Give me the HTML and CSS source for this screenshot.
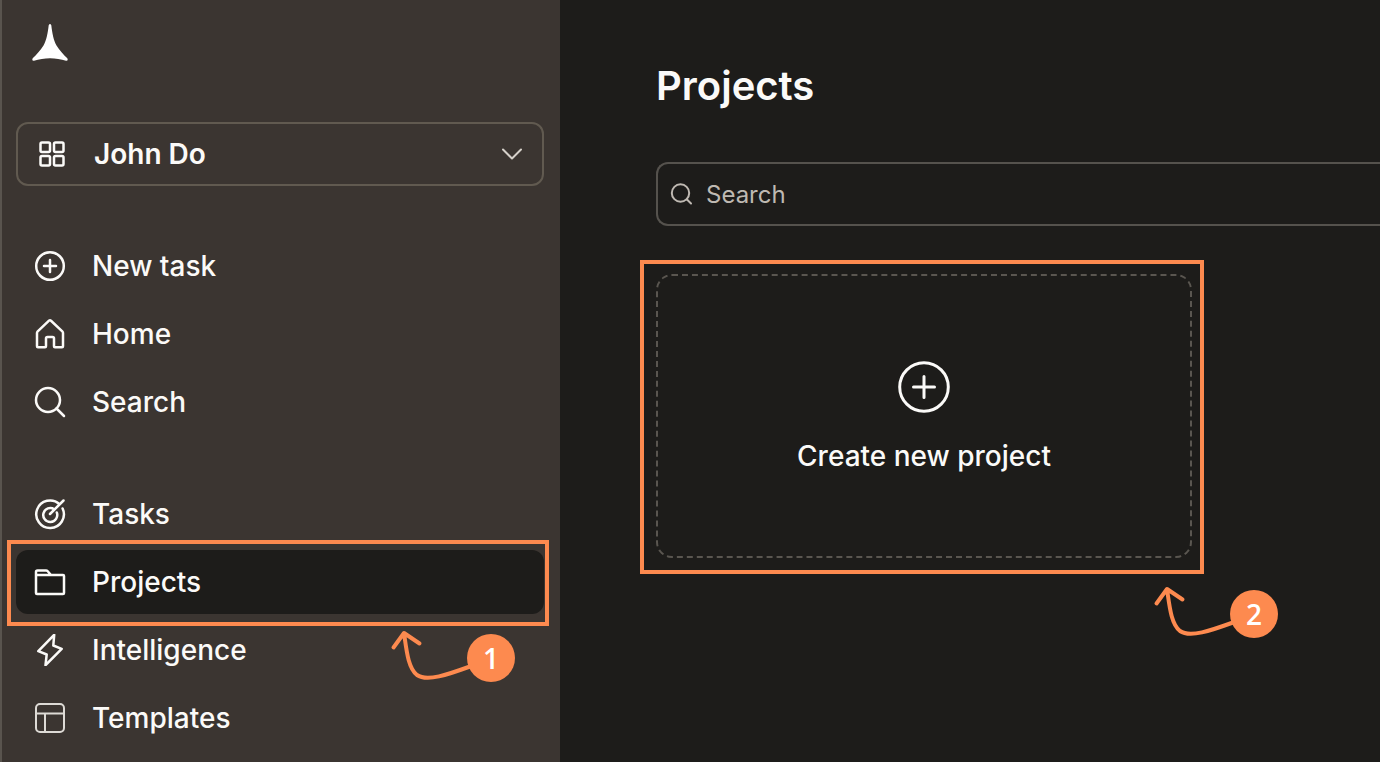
FILE: index.html
```html
<!DOCTYPE html>
<html lang="en">
<head>
<meta charset="utf-8">
<title>Projects</title>
<link rel="stylesheet" href="styles.css">
</head>
<body>
<div class="app">
  <aside class="sidebar">
    <a class="brand" href="#" aria-label="Dashboard">
      <svg class="logo" viewBox="0 0 36 38" aria-hidden="true"><path d="M16.700 1.200Q18-1 19.300 1.200C20.200 9 21.600 16.500 24.500 21.500C27.500 26.500 31.500 30.500 35.300 34.300Q36.500 37 34 36.700C29 35.200 23.500 34.300 18 34.300S7 35.200 2 36.700Q-.5 37 .7 34.300C4.500 30.500 8.500 26.500 11.500 21.500C14.400 16.500 15.800 9 16.700 1.200Z"/></svg>
    </a>
    <div class="workspace">
      <svg class="icon" viewBox="0 0 32 32" aria-hidden="true"><g><rect x="4.500" y="4.500" width="9.500" height="9.500" rx="1.500"/><rect x="18" y="4.500" width="9.500" height="9.500" rx="1.500"/><rect x="4.500" y="18" width="9.500" height="9.500" rx="1.500"/><rect x="18" y="18" width="9.500" height="9.500" rx="1.500"/></g></svg>
      <select class="workspace-select" aria-label="Workspace"><option>John Do</option></select>
      <svg class="chevron" viewBox="0 0 20 12" aria-hidden="true"><path d="M1 1.500l9 9 9-9"/></svg>
    </div>
    <nav class="nav">
      <div class="nav-group">
        <a class="nav-item" href="#"><svg class="icon" viewBox="0 0 32 32" aria-hidden="true"><circle cx="16" cy="16" r="13.800"/><path d="M16 10v12M10 16h12"/></svg>New task</a>
        <a class="nav-item" href="#"><svg class="icon" viewBox="0 0 32 32" aria-hidden="true"><path d="M4 29.200q-1 0-1-1V15q0-1 .7-1.700L15 2.700q1-.9 2 0l11.300 10.600q.7.700.7 1.700v13.200q0 1-1 1h-7q-1 0-1-1V20.500q0-1.500-1.500-1.500h-5q-1.500 0-1.500 1.500v7.700q0 1-1 1Z"/></svg>Home</a>
        <a class="nav-item" href="#"><svg class="icon" viewBox="0 0 32 32" aria-hidden="true"><circle cx="14" cy="14" r="12"/><path d="M22.500 22.500l7.500 7.500"/></svg>Search</a>
      </div>
      <div class="nav-group">
        <a class="nav-item" href="#"><svg class="icon" viewBox="0 0 32 32" aria-hidden="true"><path d="M25.500 6.200A13.800 13.800 0 1 0 28.600 10.500M20.200 11.200A7 7 0 1 0 22.800 14.500M16 16L29.500 2.500"/></svg>Tasks</a>
        <a class="nav-item nav-item-active" href="#" aria-current="page"><svg class="icon" viewBox="0 0 32 32" aria-hidden="true"><path d="M2 9V6q0-1.500 1.500-1.500h8.500q1 0 1.700.8L17 9M2 9h27q1 0 1 1v17q0 1-1 1H3q-1 0-1-1Z"/></svg>Projects
          <span class="frame frame-nav"></span>
          <span class="callout callout-nav"><svg class="arrow" viewBox="0 0 77 54" aria-hidden="true"><path d="M3.500 19.500L14 5l15.500 10.500M14 5C16.500 22 18 40 27 47C37 54 58 46.500 80 38.500"/></svg><span class="badge">1</span></span>
        </a>
        <a class="nav-item" href="#"><svg class="icon" viewBox="0 0 32 32" aria-hidden="true"><path d="M20.200.8L4.300 17.200l8.400 3.300L11.500 31.200 27.700 14.800l-8.400-3.300Z"/></svg>Intelligence</a>
        <a class="nav-item" href="#"><svg class="icon icon-light" viewBox="0 0 32 32" aria-hidden="true"><rect x="2" y="2" width="28" height="28" rx="4"/><path d="M2 11.500h28M11 11.500V30"/></svg>Templates</a>
      </div>
    </nav>
  </aside>
  <main class="main">
    <h1 class="title">Projects</h1>
    <label class="search">
      <svg class="search-icon" viewBox="0 0 22 22" aria-hidden="true"><circle cx="10.500" cy="10" r="8.700"/><path d="M17 16.500l4 4"/></svg>
      <input class="search-input" type="search" placeholder="Search" aria-label="Search">
    </label>
    <div class="projects">
      <button class="create" type="button">
        <svg class="create-icon" viewBox="0 0 52 52" aria-hidden="true"><circle cx="26" cy="26" r="24.300"/><path d="M26 15.500v21M15.500 26h21"/></svg>
        Create new project
      </button>
      <span class="frame frame-create"></span>
      <span class="callout callout-create"><svg class="arrow" viewBox="0 0 77 54" aria-hidden="true"><path d="M3.500 19.500L14 5l15.500 10.500M14 5C16.500 22 18 40 27 47C37 54 58 46.500 80 38.500"/></svg><span class="badge">2</span></span>
    </div>
  </main>
</div>
</body>
</html>
```

FILE: styles.css
```css
:root {
  --sidebar: #3b3531;
  --surface: #1d1c1a;
  --text: #fbfaf8;
  --accent: #fd8a4f;
}

* {
  box-sizing: border-box;
}

body {
  margin: 0;
  background: var(--surface);
  color: var(--text);
  font-family: Inter, "Liberation Sans", sans-serif;
  font-size: 28px;
  font-weight: 500;
  line-height: 36px;
}

svg {
  display: block;
  flex: none;
  fill: none;
  stroke: currentColor;
  stroke-width: 2.500;
  stroke-linecap: round;
  stroke-linejoin: round;
}

.app {
  display: flex;
  height: 100vh;
  overflow: hidden;
}

.sidebar {
  flex: none;
  width: 560px;
  padding: 24px 16px 12px 14px;
  background: var(--sidebar);
  border-left: 2px solid #59544e;
}

.brand {
  display: block;
  width: 36px;
  margin-left: 16px;
  color: #fff;
}

.logo {
  width: 36px;
  height: 38px;
  fill: currentColor;
  stroke: none;
}

.workspace {
  display: flex;
  align-items: center;
  gap: 26px;
  height: 64px;
  margin-top: 60px;
  padding: 0 20px 0 18px;
  border: 2px solid #615a50;
  border-radius: 12px;
}

.workspace-select {
  flex: 1;
  min-width: 0;
  height: 60px;
  padding: 0;
  border: 0;
  appearance: none;
  background: transparent;
  color: inherit;
  font: inherit;
  font-weight: 600;
}

.chevron {
  width: 20px;
  height: 12px;
  color: #d6d1ca;
  stroke-width: 2;
}

.nav {
  display: grid;
  gap: 48px;
  margin-top: 48px;
}

.nav-group {
  display: grid;
  gap: 4px;
}

.nav-item {
  position: relative;
  display: flex;
  align-items: center;
  gap: 26px;
  height: 64px;
  padding: 0 18px;
  border-radius: 12px;
  color: inherit;
  text-decoration: none;
}

.nav-item-active {
  z-index: 1;
  background: var(--surface);
}

.icon {
  width: 32px;
  height: 32px;
}

.icon-light {
  color: #dedbd6;
  stroke-width: 2;
}

.main {
  flex: 1;
  min-width: 0;
  padding: 62px 0 0 96px;
}

.title {
  margin: 0;
  font-size: 40px;
  font-weight: 600;
  line-height: 48px;
}

.search {
  display: flex;
  align-items: center;
  gap: 14px;
  height: 64px;
  margin-top: 52px;
  padding-left: 12px;
  border: 2px solid #55524d;
  border-right: 0;
  border-radius: 12px 0 0 12px;
  color: #bfb9b2;
}

.search-icon {
  width: 22px;
  height: 22px;
  stroke-width: 2;
}

.search-input {
  flex: 1;
  min-width: 0;
  height: 60px;
  padding: 0;
  border: 0;
  outline: 0;
  background: transparent;
  color: inherit;
  font: inherit;
  font-size: 24px;
  font-weight: 400;
}

.search-input::placeholder {
  color: inherit;
}

.projects {
  position: relative;
  width: 536px;
  margin-top: 48px;
}

.create {
  display: flex;
  flex-direction: column;
  align-items: center;
  justify-content: center;
  gap: 25px;
  width: 100%;
  height: 284px;
  padding: 3px 0 0;
  border: 2px dashed #5a5650;
  border-radius: 16px;
  background: transparent;
  color: inherit;
  font: inherit;
}

.create-icon {
  width: 52px;
  height: 52px;
  stroke-width: 3;
}

.frame {
  position: absolute;
  border: 4px solid var(--accent);
  pointer-events: none;
}

.frame-nav {
  inset: -10px -5px -12px -9px;
}

.frame-create {
  inset: -14px -12px -16px -16px;
}

.callout {
  position: absolute;
  display: flex;
  align-items: flex-end;
}

.callout-nav {
  top: 78px;
  right: 29px;
}

.callout-create {
  top: 310px;
  right: -86px;
}

.arrow {
  width: 77px;
  height: 54px;
  overflow: visible;
  color: var(--accent);
  stroke-width: 4;
}

.badge {
  width: 48px;
  height: 48px;
  border-radius: 50%;
  background: var(--accent);
  color: #fff;
  font-family: "Open Sans", "Noto Sans", sans-serif;
  font-size: 28px;
  font-weight: 600;
  line-height: 48px;
  text-align: center;
}
```
